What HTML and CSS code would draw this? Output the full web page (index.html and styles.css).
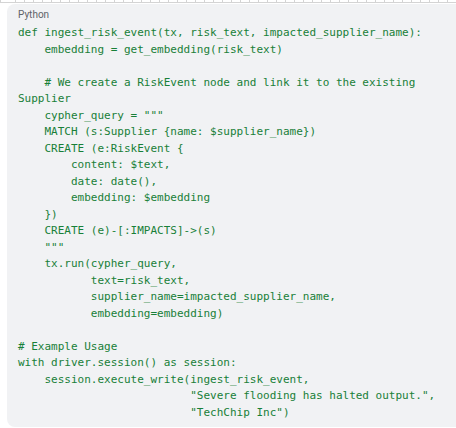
FILE: index.html
```html
<!DOCTYPE html>
<html>
<head>
<meta charset="utf-8">
<link rel="stylesheet" href="styles.css">
</head>
<body>
<div class="ruler"></div>
<div class="card">
<div class="lang">Python</div>
<pre class="code">def ingest_risk_event(tx, risk_text, impacted_supplier_name):
    embedding = get_embedding(risk_text)

    # We create a RiskEvent node and link it to the existing
Supplier
    cypher_query = """
    MATCH (s:Supplier {name: $supplier_name})
    CREATE (e:RiskEvent {
        content: $text,
        date: date(),
        embedding: $embedding
    })
    CREATE (e)-[:IMPACTS]->(s)
    """
    tx.run(cypher_query,
           text=risk_text,
           supplier_name=impacted_supplier_name,
           embedding=embedding)

# Example Usage
with driver.session() as session:
    session.execute_write(ingest_risk_event,
                          "Severe flooding has halted output.",
                          "TechChip Inc")</pre>
</div>
</body>
</html>
```
FILE: styles.css
```css
html, body {
  margin: 0;
  padding: 0;
  background: #ffffff;
  overflow: hidden;
}
.ruler {
  height: 3px;
  border-bottom: 1px solid #d4d4d4;
  box-sizing: border-box;
  background: repeating-linear-gradient(to right, transparent 0, transparent 8px, #d4d4d4 8px, #d4d4d4 9px);
  background-position: 7px 0;
}
.card {
  margin: 1px 0 0 7px;
  background: #f1f2f4;
  border-radius: 8px 0 0 8px;
  padding: 5px 0 7px 11px;
  height: 411px;
  box-sizing: border-box;
  height: 423px;
}
.lang {
  font-family: Roboto, "Liberation Sans", sans-serif;
  font-size: 10px;
  line-height: 12px;
  color: #5f6368;
}
.code {
  margin: 4px 0 0 0;
  font-family: "DejaVu Sans Mono", "Liberation Mono", monospace;
  font-size: 11px;
  line-height: 16.5px;
  color: #188038;
  white-space: pre;
}
```
